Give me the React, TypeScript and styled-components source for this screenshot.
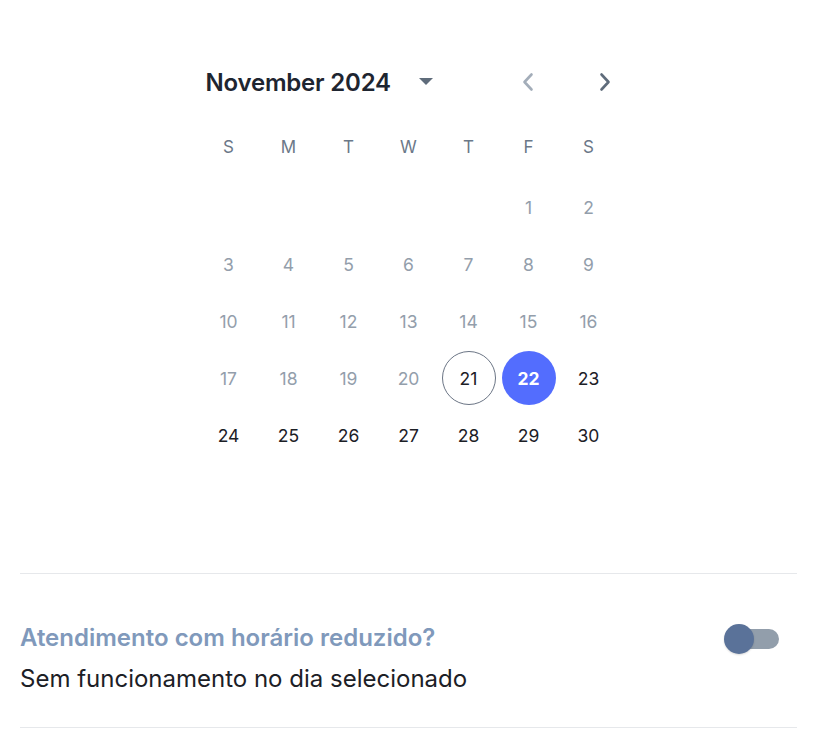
import React from "react";
import styled, { createGlobalStyle } from "styled-components";

const Global = createGlobalStyle`
  html, body { margin: 0; padding: 0; background: #ffffff; }
  body { font-family: Inter, "Noto Sans", sans-serif; -webkit-font-smoothing: antialiased; }
`;

const Page = styled.div`
  width: 818px;
  padding: 0 21px 0 20px;
  box-sizing: border-box;
`;

const Calendar = styled.div`
  width: 420px;
  margin: 0 auto;
  padding-top: 62px;
`;

const Header = styled.div`
  height: 40px;
  display: flex;
  align-items: center;
  padding-left: 7px;
`;

const Title = styled.div`
  font-size: 24px;
  font-weight: 600;
  color: #1e2530;
  letter-spacing: -0.2px;
`;

const IconButton = styled.button<{ $muted?: boolean }>`
  border: 0;
  background: transparent;
  padding: 0;
  width: 30px;
  height: 30px;
  display: flex;
  align-items: center;
  justify-content: center;
  color: ${(p) => (p.$muted ? "#a3adb9" : "#5f6c7b")};
  cursor: pointer;
`;

const DropButton = styled(IconButton)`
  margin-left: 20px;
`;

const Nav = styled.div`
  margin-left: auto;
  margin-right: -1px;
  display: flex;
  gap: 47px;
`;

const WeekRow = styled.div`
  margin-top: 25px;
  display: grid;
  grid-template-columns: repeat(7, 60px);
  height: 40px;
  align-items: center;
`;

const WeekDay = styled.div`
  text-align: center;
  font-size: 17px;
  color: #6b7888;
`;

const Days = styled.div`
  margin-top: 13px;
  display: grid;
  grid-template-columns: repeat(7, 60px);
  grid-auto-rows: 54px;
  row-gap: 3px;
`;

const Day = styled.div<{ $variant: "past" | "normal" | "today" | "selected" | "empty" }>`
  width: 54px;
  height: 54px;
  margin: 0 3px;
  box-sizing: border-box;
  border-radius: 50%;
  display: flex;
  align-items: center;
  justify-content: center;
  font-size: 17.5px;
  color: ${(p) =>
    p.$variant === "past" ? "#939eab" : p.$variant === "selected" ? "#ffffff" : "#1c2026"};
  font-weight: ${(p) => (p.$variant === "selected" ? 700 : 400)};
  background: ${(p) => (p.$variant === "selected" ? "#536dfe" : "transparent")};
  border: ${(p) => (p.$variant === "today" ? "1px solid #6b7585" : "0")};
`;

const Divider = styled.hr<{ $top: number }>`
  border: 0;
  border-top: 1px solid #e6e8eb;
  margin: ${(p) => p.$top}px 0 0;
`;

const Setting = styled.div`
  display: flex;
  justify-content: space-between;
  align-items: flex-start;
  padding: 50px 0 0;
  height: 103px;
  box-sizing: border-box;
`;

const SettingText = styled.div`
  display: flex;
  flex-direction: column;
  gap: 14px;
`;

const SettingTitle = styled.div`
  font-size: 24px;
  font-weight: 600;
  color: #8099bb;
  line-height: 28px;
`;

const SettingSub = styled.div`
  font-size: 24px;
  color: #1c2026;
  line-height: 26px;
`;

const Switch = styled.div`
  position: relative;
  width: 55px;
  height: 30px;
  margin: 0 18px 0 0;
  display: flex;
  align-items: center;
`;

const Track = styled.div`
  margin-left: 4px;
  width: 51px;
  height: 20px;
  border-radius: 10px;
  background: #929eab;
`;

const Thumb = styled.div`
  position: absolute;
  left: 0;
  top: 0;
  width: 30px;
  height: 30px;
  border-radius: 50%;
  background: #5a7299;
  box-shadow: 0 1px 2px rgba(0, 0, 0, 0.15);
`;

const Caret = () => (
  <svg width="14" height="8" viewBox="0 0 14 8">
    <path d="M0 0 L14 0 L7 7 Z" fill="#5f6c7b" />
  </svg>
);

const Chevron = ({ dir }: { dir: "left" | "right" }) => (
  <svg width="14" height="20" viewBox="0 0 14 20">
    <path
      d={dir === "left" ? "M10.5 2.5 L3.5 10 L10.5 17.5" : "M3.5 2.5 L10.5 10 L3.5 17.5"}
      fill="none"
      stroke="currentColor"
      strokeWidth="2.6"
      strokeLinecap="round"
      strokeLinejoin="round"
    />
  </svg>
);

const weekdays = ["S", "M", "T", "W", "T", "F", "S"];

export default function App() {
  const cells: { n: number | null }[] = [];
  for (let i = 0; i < 5; i++) cells.push({ n: null });
  for (let d = 1; d <= 30; d++) cells.push({ n: d });

  const variantFor = (n: number | null) => {
    if (n === null) return "empty" as const;
    if (n === 21) return "today" as const;
    if (n === 22) return "selected" as const;
    if (n < 21) return "past" as const;
    return "normal" as const;
  };

  return (
    <>
      <Global />
      <Page>
        <Calendar>
          <Header>
            <Title>November 2024</Title>
            <DropButton aria-label="Choose view">
              <Caret />
            </DropButton>
            <Nav>
              <IconButton $muted aria-label="Previous month">
                <Chevron dir="left" />
              </IconButton>
              <IconButton aria-label="Next month">
                <Chevron dir="right" />
              </IconButton>
            </Nav>
          </Header>
          <WeekRow>
            {weekdays.map((w, i) => (
              <WeekDay key={i}>{w}</WeekDay>
            ))}
          </WeekRow>
          <Days>
            {cells.map((c, i) => (
              <Day key={i} $variant={variantFor(c.n)}>
                {c.n ?? ""}
              </Day>
            ))}
          </Days>
        </Calendar>
        <Divider $top={111} />
        <Setting>
          <SettingText>
            <SettingTitle>Atendimento com horário reduzido?</SettingTitle>
            <SettingSub>Sem funcionamento no dia selecionado</SettingSub>
          </SettingText>
          <Switch>
            <Track />
            <Thumb />
          </Switch>
        </Setting>
        <Divider $top={50} />
      </Page>
    </>
  );
}
